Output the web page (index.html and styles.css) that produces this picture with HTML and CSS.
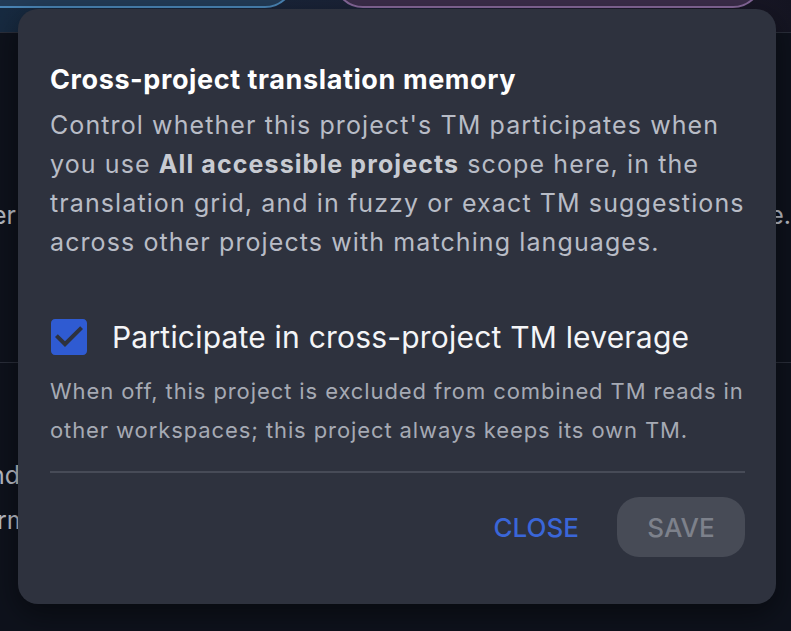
FILE: index.html
```html
<!DOCTYPE html>
<html lang="en">
<head>
    <meta charset="UTF-8">
    <meta name="viewport" content="width=device-width, initial-scale=1.0">
    <title>Project settings</title>
    <link rel="stylesheet" href="styles.css">
</head>
<body>

    <!-- Page behind the dialog -->
    <div class="page">
        <div class="top-bar">
            <div class="pill pill-blue"></div>
            <div class="pill pill-purple"></div>
        </div>
        <div class="section section-tall">
            <span>er</span>
            <span>e.</span>
        </div>
        <div class="section section-rest">
            <span class="cut-nd">nd</span>
            <span class="cut-rm">rm</span>
        </div>
    </div>

    <!-- Cross-project TM dialog -->
    <div class="dialog">
        <h3 class="dialog-title">Cross-project translation memory</h3>
        <p class="dialog-text">
            Control whether this project's TM participates when you use <strong>All accessible projects</strong> scope here, in the translation grid, and in fuzzy or exact TM suggestions across other projects with matching languages.
        </p>

        <label class="check-row">
            <svg class="checkbox" width="36" height="36" viewBox="3 3 18 18">
                <path fill="#2f5bd2" d="M19 3H5c-1.11 0-2 .9-2 2v14c0 1.1.89 2 2 2h14c1.11 0 2-.9 2-2V5c0-1.1-.89-2-2-2zm-9 14l-5-5 1.41-1.41L10 14.17l7.59-7.59L19 8l-9 9z"/>
            </svg>
            <span class="check-label">Participate in cross-project TM leverage</span>
        </label>
        <p class="help-text">When off, this project is excluded from combined TM reads in other workspaces; this project always keeps its own TM.</p>

        <div class="actions">
            <button class="btn-close">CLOSE</button>
            <button class="btn-save" disabled>SAVE</button>
        </div>
    </div>

</body>
</html>
```

FILE: styles.css
```css
body {
    font-family: Inter, "Noto Sans", sans-serif;
    background-color: #0e121c;
    margin: 0;
    padding: 0;
    width: 791px;
    height: 631px;
    overflow: hidden;
    position: relative;
}
.page {
    display: flex;
    flex-direction: column;
    height: 100%;
    color: #b9bdc6;
    font-size: 25px;
}
.top-bar {
    height: 33px;
    flex-shrink: 0;
    display: flex;
    gap: 38px;
    border-bottom: 1px solid #2a2e3a;
    background: linear-gradient(90deg, #172a40 0%, #1a2236 45%, #211c30 75%, #151522 100%);
    box-sizing: border-box;
}
.pill {
    height: 60px;
    margin-top: -52px;
    border-radius: 30px;
    box-sizing: border-box;
    flex-shrink: 0;
}
.pill-blue {
    width: 340px;
    margin-left: -45px;
    background-color: #233c58;
    border: 2px solid #4a85b6;
}
.pill-purple {
    width: 430px;
    background-color: #3b2d4a;
    border: 2px solid #86689a;
}
.section {
    display: flex;
    justify-content: space-between;
    border-bottom: 1px solid #2a2e3a;
}
.section-tall {
    height: 330px;
    align-items: center;
    padding-top: 34px;
    box-sizing: border-box;
}
.section-tall span:first-child {
    margin-left: -8px;
}
.section-rest {
    flex: 1;
    flex-direction: column;
    justify-content: flex-start;
    padding-top: 90px;
    line-height: 45px;
    border-bottom: none;
}
.cut-nd {
    margin-left: -10px;
}
.cut-rm {
    margin-left: -3px;
}
.dialog {
    position: absolute;
    left: 18px;
    top: 9px;
    width: 758px;
    height: 595px;
    box-sizing: border-box;
    padding: 55px 31px 0 32px;
    background-color: #2e323e;
    border-radius: 20px;
    box-shadow: 0 10px 30px rgba(0, 0, 0, 0.45);
    color: #ffffff;
}
.dialog-title {
    margin: 0;
    font-size: 27px;
    font-weight: 700;
    line-height: 32px;
    letter-spacing: 0.6px;
}
.dialog-text {
    margin: 10px -15px 0 0;
    font-size: 25px;
    line-height: 39px;
    letter-spacing: 1.1px;
    color: #b8bcc6;
}
.dialog-text strong {
    color: #c8cbd2;
    font-weight: 700;
}
.check-row {
    display: flex;
    align-items: center;
    gap: 25px;
    margin-top: 57px;
    padding-left: 1px;
}
.checkbox {
    flex-shrink: 0;
    display: block;
}
.check-label {
    font-size: 30px;
    line-height: 36px;
    letter-spacing: 0.2px;
    color: #f4f5f7;
}
.help-text {
    margin: 17px -12px 0 0;
    font-size: 22px;
    line-height: 39px;
    letter-spacing: 0.9px;
    color: #a6aab4;
    padding-bottom: 21px;
}
.actions {
    display: flex;
    justify-content: flex-end;
    align-items: center;
    gap: 38px;
    border-top: 2px solid #474b57;
    padding-top: 24px;
}
.btn-close,
.btn-save {
    font-family: Inter, "Noto Sans", sans-serif;
    font-size: 26px;
    font-weight: 500;
    border: none;
    cursor: pointer;
}
.btn-close {
    background: none;
    color: #3a66d8;
    padding: 0;
}
.btn-save {
    background-color: #474b56;
    color: #7d818b;
    width: 128px;
    height: 60px;
    border-radius: 22px;
}
```
